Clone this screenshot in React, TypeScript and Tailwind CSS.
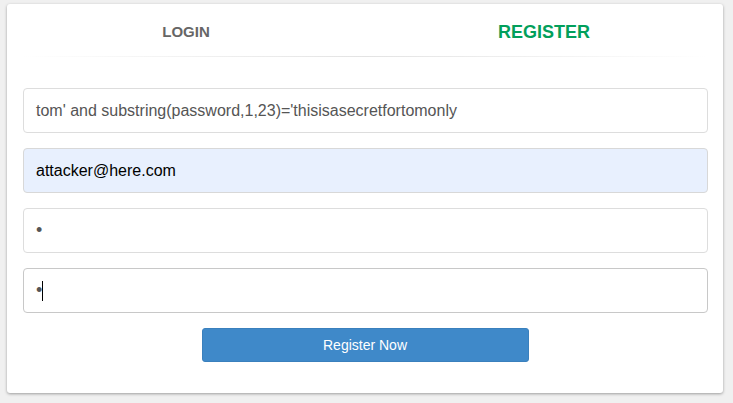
import React from 'react';

const fields = [
  { value: "tom' and substring(password,1,23)='thisisasecretfortomonly", autofill: false },
  { value: 'attacker@here.com', autofill: true },
  { value: '•', autofill: false },
  { value: '•', autofill: false, focused: true },
];

const App: React.FC = () => {
  return (
    <div className="min-h-[403px] w-[733px] bg-[#f0f0f0] pl-[7px] pt-[4px] font-['Liberation_Sans',Arial,sans-serif]">
      <div className="w-[716px] h-[389px] bg-white rounded-[3px] shadow-[0_1px_3px_rgba(0,0,0,0.35)]">
        <div className="flex h-[52px] items-center pt-[4px]">
          <div className="flex-1 text-center text-[15px] font-bold text-[#666]">LOGIN</div>
          <div className="flex-1 text-center text-[18px] font-bold text-[#029f5b] pt-[1px]">REGISTER</div>
        </div>
        <div className="h-px mx-[14px] bg-gradient-to-r from-transparent via-[#e3e3e3] to-transparent" />
        <div className="px-[16px]">
          <div className="flex flex-col gap-[15px] pt-[31px]">
            {fields.map((f, i) => (
              <div
                key={i}
                className={
                  'h-[45px] w-[685px] rounded-[4px] border flex items-center pl-[12px] text-[16px] ' +
                  (f.autofill
                    ? 'bg-[#e8f0fe] border-[#d8d8d8] text-black'
                    : f.focused
                    ? 'bg-white border-[#c8c8c8] text-[#555]'
                    : 'bg-white border-[#dddddd] text-[#555]')
                }
              >
                <span className={f.value === '•' ? 'text-[18px] text-[#555]' : ''}>{f.value}</span>
                {f.focused && <span className="inline-block w-px h-[20px] bg-black" />}
              </div>
            ))}
          </div>
          <div className="flex justify-center pt-[15px]">
            <button className="w-[327px] h-[34px] rounded-[3px] bg-[#3f89c9] border border-[#3a80bd] text-white text-[14px]">
              Register Now
            </button>
          </div>
        </div>
      </div>
    </div>
  );
};

export default App;
